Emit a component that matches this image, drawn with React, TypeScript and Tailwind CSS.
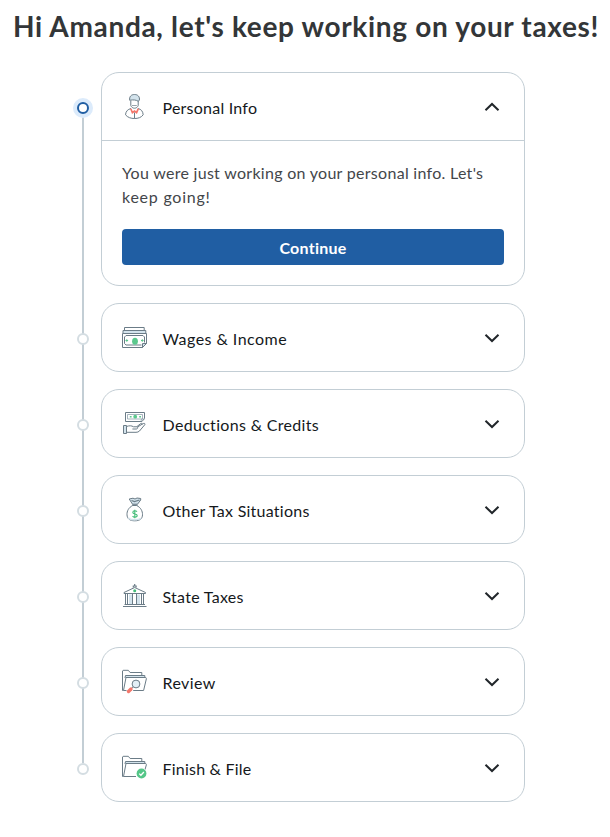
import type { ReactNode } from "react";

const slate = "#6b7c87";

function PersonIcon() {
  return (
    <svg viewBox="7 7 27 27" className="size-[27px] shrink-0" fill="none" stroke={slate} strokeWidth="1">
      <path d="M17 22.500c-3.200.9-5.100 2.500-5.500 6.300 2.300 2.700 5.300 3.700 9 3.700s6.700-1 8.700-3.700c-.4-3.800-2-5.400-5.100-6.300" fill="#fff" />
      <path d="M16.800 15v4.500c.8 1.800 2 2.700 3.700 2.700s3-.9 3.700-2.700V15" fill="#fff" />
      <path d="M15.700 14.300c-.5-3.600 1.300-5.800 4.800-5.800s5.400 2.200 4.900 5.800l-1.300.9c-1.900-1.200-4.400-1.700-8.400-.9z" fill="#d3e3ec" />
      <path d="M16.800 22.700l1.600 4 2.100-1.700 2.100 1.700 1.700-4" stroke="#f4776b" strokeWidth="1.700" />
      <path d="M20.500 26.500v6" />
      <path d="M18 19.500h4.800" strokeWidth=".7" />
    </svg>
  );
}

function WagesIcon() {
  return (
    <svg viewBox="7 6 27 27" className="size-[27px] shrink-0" fill="none" stroke={slate} strokeWidth="1">
      <path d="M10.500 12V9.500h19.700V12" fill="#fff" />
      <path d="M9 15.500v-3h22.800v3" fill="#d3e3ec" />
      <path d="M8.500 15.500h24v10l-4 4h-20z" fill="#fff" />
      <path d="M12 17.500h17l1.500 1.500v5.500M10.500 25.500V19l1.500-1.500M10.500 25.500l1.500 1.500h15.500" />
      <path d="M28.500 29.500v-4h4z" fill="#d3e3ec" />
      <ellipse cx="21" cy="23.300" rx="2.900" ry="3.500" fill="#5bc88d" stroke="none" />
      <path d="M11.500 22.500h2.600M12.800 21.200v2.600M27 22.500h2.600M28.300 21.200v2.600" stroke="#5bc88d" />
    </svg>
  );
}

function DeductionsIcon() {
  return (
    <svg viewBox="7 6 27 27" className="size-[27px] shrink-0" fill="none" stroke={slate} strokeWidth="1">
      <path d="M11.500 8.500h19v6l-2.500 3H11.500z" fill="#fff" />
      <path d="M13.500 10.500h15v4.500h-15zM27 17.500l.5-2.500h3" stroke="#91a2ad" strokeWidth=".8" />
      <circle cx="21.200" cy="12.700" r="1.900" fill="#5bc88d" stroke="none" />
      <path d="M15.800 12.700h1.800M25.200 12.700H27" stroke="#5bc88d" strokeWidth="1.400" />
      <path d="M9.500 21.500h3v8h-3z" fill="#d3e3ec" />
      <path d="M12.500 22.500c3-1 5-1 7 .3h3.700c1 .9.5 2-.8 2.200h-4M23.500 23l5.800-3.500c1.300-.4 2 .2 1.500 1.200L25.500 27c-1 .9-2 1.300-3.500 1.300h-9.500" fill="#fff" />
      <path d="M23 22.500l3.800-3c1-.4 1.700.1 1.300 1" />
    </svg>
  );
}

function MoneyBagIcon() {
  return (
    <svg viewBox="7 6 27 27" className="size-[27px] shrink-0" fill="none" stroke={slate} strokeWidth="1">
      <path d="M18.700 15.500c-4 2-5.900 5.500-5.700 9.300.2 3.800 2.500 6 7.800 6s7.600-2.200 7.700-6c.1-3.800-1.800-7.300-5.800-9.300z" fill="#fff" />
      <path d="M14.500 28c2 2.300 10 2.500 12.500.2" stroke="#d3e3ec" strokeWidth="1.500" />
      <path d="M18.500 14.200l-3.300-5.200 3.800-.8 2 .8 2-1 3.700.5v1.500l-3.200 4.200z" fill="#d3e3ec" />
      <path d="M17.500 10.500l3 1 5-1.500M18 15h5.600" strokeWidth="1.200" />
      <path d="M23 21.800c-.6-.9-1.400-1-2.200-1-1.300 0-2 .6-2 1.600 0 2.300 4.400.9 4.400 3.200 0 1-1 1.600-2.300 1.600-1 0-1.800-.4-2.300-1.100M20.800 19.700v8.600" stroke="#43bd79" strokeWidth="1.100" />
    </svg>
  );
}

function StateIcon() {
  return (
    <svg viewBox="7 6 27 27" className="size-[27px] shrink-0" fill="none" stroke={slate} strokeWidth="1">
      <path d="M10 17.500v-1l10.700-5 10.800 5v1z" fill="#fff" />
      <path d="M20.700 8v2M19.300 11.500V10h2.800v1.500" strokeWidth="1.200" />
      <circle cx="20.700" cy="14.700" r="1.500" fill="#43bd79" stroke="none" />
      <path d="M15 18.500h3v9.500h-3zM23 18.500h3v9.500h-3z" fill="#d3e3ec" stroke="none" />
      <path d="M11.500 18v10M13.500 18v10M18.500 18v10M22.500 18v10M27.500 18v10M29.500 18v10" />
      <path d="M10.500 28.500h20.500M9 30.500h23.500" />
    </svg>
  );
}

function Folder() {
  return (
    <>
      <path d="M9.500 28.500h-1V9l.6-.7h5.200l1.800 2.200h11.700v4" fill="#fff" />
      <path d="M11 16l.5-2.500h19.300V17" fill="#d3e3ec" />
      <path d="M9.500 28.500l2.500-13h19.800l.6 1.200-2.800 11.800z" fill="#fff" />
    </>
  );
}

function ReviewIcon() {
  return (
    <svg viewBox="7 6 27 27" className="size-[27px] shrink-0" fill="none" stroke={slate} strokeWidth="1">
      <Folder />
      <path d="M11.500 29.500l5-5 4 2-3 4.500z" fill="#fff" stroke="none" />
      <circle cx="22" cy="22" r="3.900" fill="#e3eff6" />
      <path d="M19 24.800l-1.500 1.500" />
      <path d="M17 27l-2.500 2.500" stroke="#f4776b" strokeWidth="3.400" strokeLinecap="round" />
    </svg>
  );
}

function FinishIcon() {
  return (
    <svg viewBox="7 6 27 27" className="size-[27px] shrink-0" fill="none" stroke={slate} strokeWidth="1">
      <path d="M9.500 28.500h-1V9l.6-.7h5.200l1.800 2.200h11.700v4" fill="#fff" />
      <path d="M11 16l.5-2.500h19.300V17" fill="#d3e3ec" />
      <path d="M22 28.500H9.500l2.500-13h19.800l.6 1.200-1.400 5" fill="#fff" />
      <circle cx="27.500" cy="25.500" r="5.400" fill="#fff" stroke="none" />
      <circle cx="27.500" cy="25.500" r="4.900" fill="#54c688" stroke="none" />
      <path d="M25.200 25.600l1.700 1.700 3-3.300" stroke="#fff" strokeWidth="1.300" />
    </svg>
  );
}

function Chevron({ up = false }: { up?: boolean }) {
  return (
    <svg viewBox="0 0 16 10" className="h-[10px] w-4 shrink-0" fill="none" stroke="#21262a" strokeWidth="2">
      <path d={up ? "M1.500 8.200L8 2l6.500 6.200" : "M1.500 1.800L8 8l6.500-6.200"} />
    </svg>
  );
}

function Section({ icon, title, spacing, active = false, children }: {
  icon: ReactNode; title: string; spacing: string; active?: boolean; children?: ReactNode;
}) {
  return (
    <li className="relative flex">
      <div className="w-[28px] shrink-0 pt-[26px]">
        {active ? (
          <div className="flex size-5 items-center justify-center rounded-full bg-[#dcebfb]">
            <div className="size-3 rounded-full border-2 border-[#205ea3] bg-white" />
          </div>
        ) : (
          <div className="ml-1 mt-1 size-3 rounded-full border-2 border-[#d4dde2] bg-white" />
        )}
      </div>
      <section className="w-[424px] rounded-[18px] border border-[#c3ced5] bg-white">
        <div className="flex h-[67px] items-center pl-[19px] pr-[24px]">
          {icon}
          <h2 className={`ml-[14.500px] mt-[3px] flex-1 whitespace-nowrap text-[16px] font-normal text-[#15191c] ${spacing}`}>
            {title}
          </h2>
          <Chevron up={active} />
        </div>
        {children}
      </section>
    </li>
  );
}

export default function App() {
  return (
    <main className="h-[837px] w-[610px] overflow-hidden bg-white font-['Lato','Open_Sans',sans-serif] [font-variant-ligatures:none]">
      <h1 className="h-[72px] whitespace-nowrap pl-[13px] pt-[6px] text-[28px] font-bold leading-[40px] tracking-[0.670px] text-[#333638]">
        Hi Amanda, let's keep working on your taxes!
      </h1>
      <div className="relative ml-[73px]">
        <div className="absolute left-[9px] top-9 h-[655px] w-[2px] bg-[#c3ced5]" />
        <ul className="flex flex-col gap-[17px]">
          <Section active icon={<PersonIcon />} title="Personal Info" spacing="tracking-[0.230px]">
            <div className="border-t border-[#c3ced5] px-[20px] pb-[20px] pt-[20px]">
              <p className="text-[16px] leading-6 text-[#43464a]">
                <span className="whitespace-nowrap tracking-[0.290px]">You were just working on your personal info. Let's</span>
                <br />
                <span className="tracking-[0.750px]">keep going!</span>
              </p>
              <button className="mt-[20px] block h-9 w-full rounded-[4px] bg-[#205ea3] pt-[2px] text-[16px] font-bold tracking-[0.250px] text-white">
                Continue
              </button>
            </div>
          </Section>
          <Section icon={<WagesIcon />} title="Wages & Income" spacing="tracking-[0.450px]" />
          <Section icon={<DeductionsIcon />} title="Deductions & Credits" spacing="tracking-[0.320px]" />
          <Section icon={<MoneyBagIcon />} title="Other Tax Situations" spacing="tracking-[0.250px]" />
          <Section icon={<StateIcon />} title="State Taxes" spacing="tracking-[0.280px]" />
          <Section icon={<ReviewIcon />} title="Review" spacing="tracking-[0.400px]" />
          <Section icon={<FinishIcon />} title="Finish & File" spacing="tracking-[0.220px]" />
        </ul>
      </div>
    </main>
  );
}
